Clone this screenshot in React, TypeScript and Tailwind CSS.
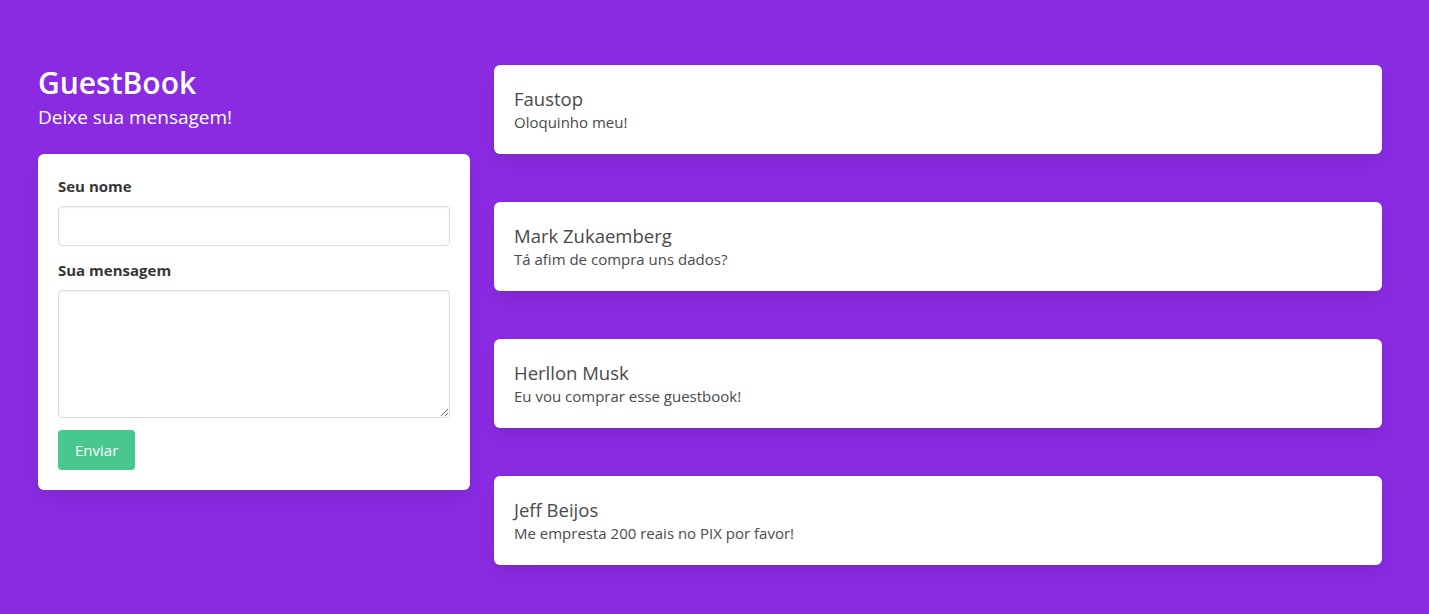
const messages = [
  { name: "Faustop", text: "Oloquinho meu!" },
  { name: "Mark Zukaemberg", text: "Tá afim de compra uns dados?" },
  { name: "Herllon Musk", text: "Eu vou comprar esse guestbook!" },
  { name: "Jeff Beijos", text: "Me empresta 200 reais no PIX por favor!" },
];

const boxShadow =
  "shadow-[0_8px_16px_-2px_rgba(10,10,10,0.1),0_0_0_1px_rgba(10,10,10,0.02)]";

function App() {
  return (
    <div
      className="min-h-[614px] bg-[#8a2be2] px-[38px] pt-[65px] text-[16px]"
      style={{ fontFamily: '"Open Sans", sans-serif' }}
    >
      <div className="flex gap-[24px]">
        <div className="w-[432px] shrink-0">
          <h1 className="text-[30px] leading-[36px] font-semibold text-white">
            GuestBook
          </h1>
          <h2 className="mt-[4px] text-[19px] leading-[25px] text-white">
            Deixe sua mensagem!
          </h2>

          <form
            className={`mt-[24px] rounded-[6px] bg-white p-[20px] ${boxShadow}`}
            onSubmit={(e) => e.preventDefault()}
          >
            <label className="mb-[8px] block text-[15px] leading-[24px] font-bold text-[#363636]">
              Seu nome
            </label>
            <input
              type="text"
              className="block h-[40px] w-full rounded-[4px] border border-[#dbdbdb] px-[11px] shadow-[inset_0_1px_2px_rgba(10,10,10,0.05)] outline-none"
            />
            <label className="mt-[12px] mb-[8px] block text-[15px] leading-[24px] font-bold text-[#363636]">
              Sua mensagem
            </label>
            <textarea className="block h-[128px] w-full rounded-[4px] border border-[#dbdbdb] p-[11px] shadow-[inset_0_1px_2px_rgba(10,10,10,0.05)] outline-none" />
            <button
              type="submit"
              className="mt-[12px] h-[40px] rounded-[4px] bg-[#48c78e] px-[17px] text-[15px] text-white"
            >
              Enviar
            </button>
          </form>
        </div>

        <div className="flex w-[888px] flex-col gap-[48px]">
          {messages.map((m) => (
            <div
              key={m.name}
              className={`rounded-[6px] bg-white p-[20px] text-[#4a4a4a] ${boxShadow}`}
            >
              <p className="pt-[1px] text-[18.5px] leading-[25px]">{m.name}</p>
              <p className="-mt-[1px] text-[15px] leading-[24px]">{m.text}</p>
            </div>
          ))}
        </div>
      </div>
    </div>
  );
}

export default App;
